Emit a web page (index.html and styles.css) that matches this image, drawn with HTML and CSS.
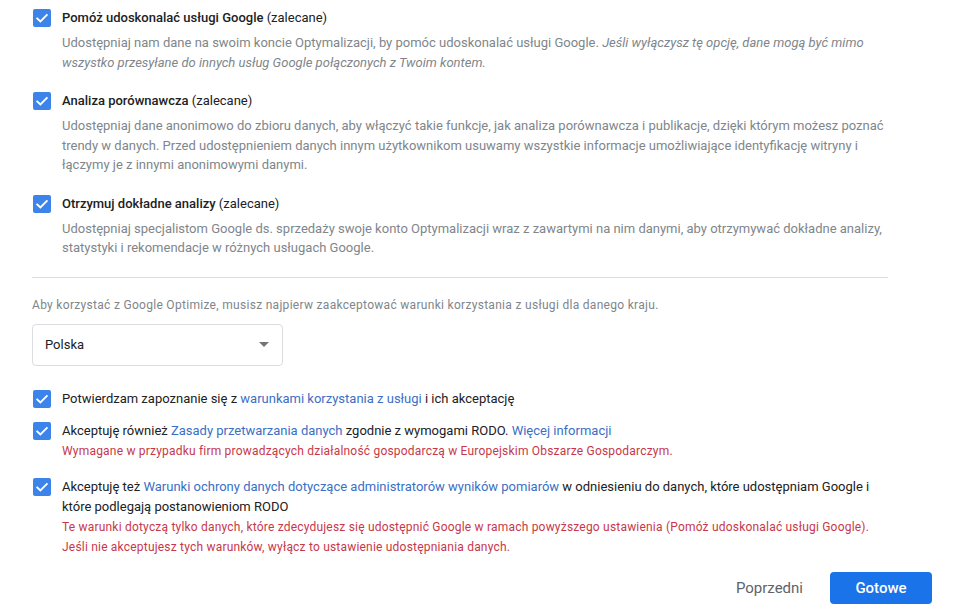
FILE: index.html
```html
<!DOCTYPE html>
<html lang="pl">
<head>
<meta charset="utf-8">
<link rel="stylesheet" href="styles.css">
</head>
<body>
<div class="page">
  <div class="option">
    <span class="cb"><svg viewBox="0 0 18 18"><path d="M4.2 9.4l3.2 3.1 6.4-6.6"/></svg></span>
    <div class="option-body">
      <div class="title"><b>Pomóż udoskonalać usługi Google</b> (zalecane)</div>
      <div class="desc">Udostępniaj nam dane na swoim koncie Optymalizacji, by pomóc udoskonalać usługi Google. <i>Jeśli wyłączysz tę opcję, dane mogą być mimo wszystko przesyłane do innych usług Google połączonych z Twoim kontem.</i></div>
    </div>
  </div>
  <div class="option">
    <span class="cb"><svg viewBox="0 0 18 18"><path d="M4.2 9.4l3.2 3.1 6.4-6.6"/></svg></span>
    <div class="option-body">
      <div class="title"><b>Analiza porównawcza</b> (zalecane)</div>
      <div class="desc">Udostępniaj dane anonimowo do zbioru danych, aby włączyć takie funkcje, jak analiza porównawcza i publikacje, dzięki którym możesz poznać trendy w danych. Przed udostępnieniem danych innym użytkownikom usuwamy wszystkie informacje umożliwiające identyfikację witryny i łączymy je z innymi anonimowymi danymi.</div>
    </div>
  </div>
  <div class="option">
    <span class="cb"><svg viewBox="0 0 18 18"><path d="M4.2 9.4l3.2 3.1 6.4-6.6"/></svg></span>
    <div class="option-body">
      <div class="title"><b>Otrzymuj dokładne analizy</b> (zalecane)</div>
      <div class="desc">Udostępniaj specjalistom Google ds. sprzedaży swoje konto Optymalizacji wraz z zawartymi na nim danymi, aby otrzymywać dokładne analizy, statystyki i rekomendacje w różnych usługach Google.</div>
    </div>
  </div>
  <hr class="divider">
  <p class="note">Aby korzystać z Google Optimize, musisz najpierw zaakceptować warunki korzystania z usługi dla danego kraju.</p>
  <div class="select"><span>Polska</span><span class="arrow"></span></div>
  <div class="terms">
    <div class="term">
      <span class="cb"><svg viewBox="0 0 18 18"><path d="M4.2 9.4l3.2 3.1 6.4-6.6"/></svg></span>
      <div class="term-body">
        <div class="term-text">Potwierdzam zapoznanie się z <a>warunkami korzystania z usługi</a> i ich akceptację</div>
      </div>
    </div>
    <div class="term">
      <span class="cb"><svg viewBox="0 0 18 18"><path d="M4.2 9.4l3.2 3.1 6.4-6.6"/></svg></span>
      <div class="term-body">
        <div class="term-text">Akceptuję również <a>Zasady przetwarzania danych</a> zgodnie z wymogami RODO. <a>Więcej informacji</a></div>
        <div class="warn">Wymagane w przypadku firm prowadzących działalność gospodarczą w Europejskim Obszarze Gospodarczym.</div>
      </div>
    </div>
    <div class="term term-last">
      <span class="cb"><svg viewBox="0 0 18 18"><path d="M4.2 9.4l3.2 3.1 6.4-6.6"/></svg></span>
      <div class="term-body">
        <div class="term-text">Akceptuję też <a>Warunki ochrony danych dotyczące administratorów wyników pomiarów</a> w odniesieniu do danych, które udostępniam Google i które podlegają postanowieniom RODO</div>
        <div class="warn">Te warunki dotyczą tylko danych, które zdecydujesz się udostępnić Google w ramach powyższego ustawienia (Pomóż udoskonalać usługi Google). Jeśli nie akceptujesz tych warunków, wyłącz to ustawienie udostępniania danych.</div>
      </div>
    </div>
  </div>
  <div class="actions">
    <button class="btn-text">Poprzedni</button>
    <button class="btn-primary">Gotowe</button>
  </div>
</div>
</body>
</html>
```
FILE: styles.css
```css
html, body {
  margin: 0;
  padding: 0;
  background: #fff;
}
body {
  font-family: Roboto, "Liberation Sans", Arial, sans-serif;
  color: #202124;
  font-size: 13px;
}
.page {
  width: 856px;
  padding: 8px 0 0 32px;
}
.option {
  display: flex;
  align-items: flex-start;
  gap: 11px;
  padding-left: 1px;
  margin-bottom: 19px;
}
.cb {
  flex: none;
  width: 18px;
  height: 18px;
  margin-top: 1px;
  border-radius: 2px;
  background: #3d84ea;
  display: block;
}
.cb svg {
  display: block;
  width: 18px;
  height: 18px;
}
.cb path {
  fill: none;
  stroke: #fff;
  stroke-width: 1.8;
  stroke-linecap: square;
}
.option-body {
  flex: 1;
}
.title {
  line-height: 20px;
  color: #202124;
}
.title b {
  font-weight: 500;
}
.desc {
  margin-top: 5px;
  line-height: 19.5px;
  color: #80868b;
}
.divider {
  border: 0;
  border-top: 1px solid #dadce0;
  margin: 0;
}
.note {
  margin: 17px 0 0;
  font-size: 12px;
  letter-spacing: 0.3px;
  line-height: 20px;
  color: #80868b;
}
.select {
  margin-top: 9px;
  height: 40px;
  border: 1px solid #dadce0;
  border-radius: 4px;
  display: flex;
  align-items: center;
  justify-content: space-between;
  padding: 0 12px;
  box-sizing: content-box;
  width: 225px;
}
.select span:first-child {
  color: #202124;
}
.arrow {
  width: 0;
  height: 0;
  border-left: 5px solid transparent;
  border-right: 5px solid transparent;
  border-top: 5px solid #757575;
  margin-right: 1px;
}
.terms {
  margin-top: 23px;
}
.term {
  display: flex;
  align-items: flex-start;
  gap: 11px;
  padding-left: 1px;
  margin-bottom: 12px;
}
.term:nth-child(2) {
  margin-bottom: 16px;
}
.term-last {
  margin-bottom: 0;
}
.term-body {
  flex: 1;
}
.term-text {
  line-height: 20px;
  color: #202124;
}
.term-text a {
  color: #3b6fc6;
  text-decoration: none;
}
.warn {
  line-height: 20px;
  font-size: 12px;
  letter-spacing: 0.2px;
  color: #c8374a;
}
.actions {
  display: flex;
  justify-content: flex-end;
  align-items: center;
  gap: 11px;
  width: 900px;
  margin-top: 15px;
}
button {
  font-family: Roboto, "Liberation Sans", Arial, sans-serif;
  font-size: 15px;
  border: 0;
  background: none;
  cursor: pointer;
}
.btn-text {
  color: #5f6368;
  padding: 0 16px;
  height: 32px;
}
.btn-primary {
  background: #1a73e8;
  color: #fff;
  font-weight: 500;
  width: 102px;
  height: 32px;
  border-radius: 4px;
}
```
